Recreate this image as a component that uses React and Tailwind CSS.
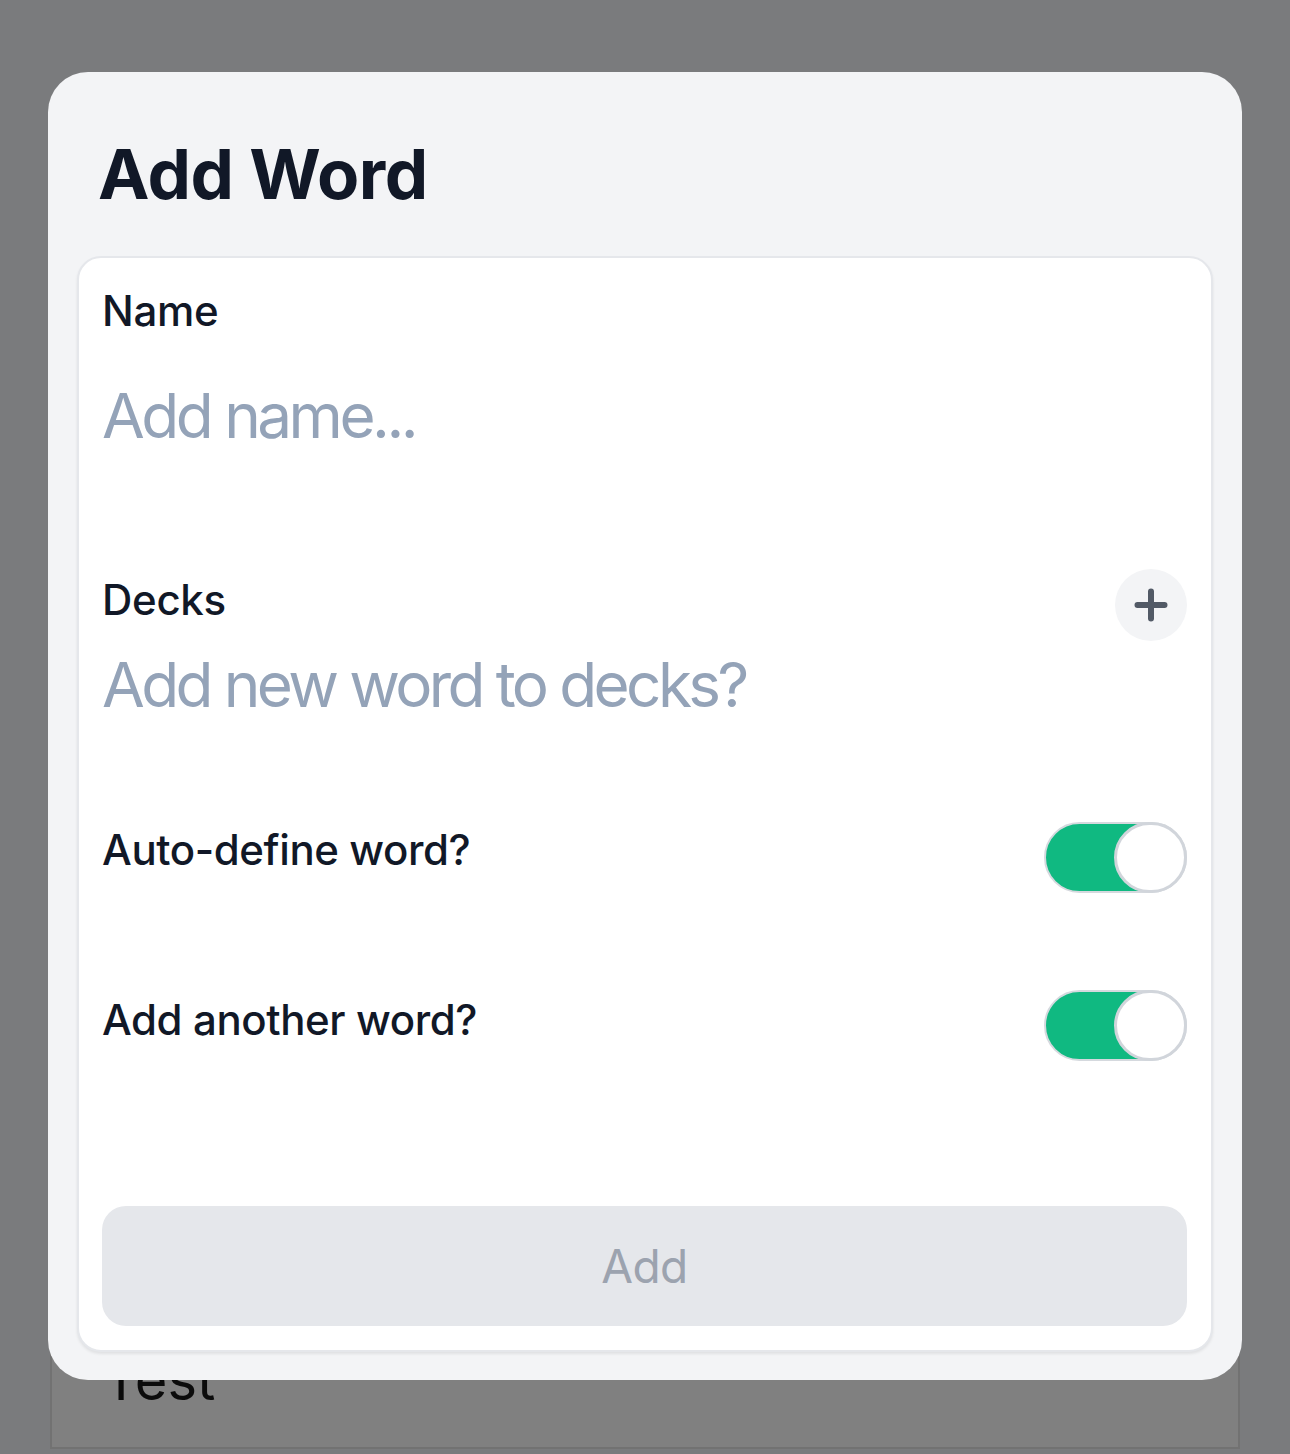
import React from "react";

function Toggle() {
  return (
    <div className="flex h-[71px] w-[143px] shrink-0 items-center justify-end rounded-full border-2 border-[#d5d9de] bg-[#10b981]">
      <div className="h-[71px] w-[73px] -mr-[2px] rounded-full border-[3px] border-[#d1d5db] bg-white" />
    </div>
  );
}

export default function App() {
  return (
    <div
      className="relative h-[1454px] w-full overflow-hidden bg-[#7a7b7d]"
      style={{ fontFamily: "Inter, 'Noto Sans', 'Liberation Sans', sans-serif" }}
    >
      {/* underlying page content */}
      <div className="px-[50px] pt-[1290px]">
        <div className="h-[159px] border-x-2 border-b-2 border-[#727272] bg-[#808080] px-[51px] pt-[60px]">
          <div className="text-[56px] leading-[60px] text-[#0b0b0b]">Test</div>
        </div>
      </div>

      {/* modal */}
      <div className="absolute left-[48px] top-[72px] flex h-[1308px] w-[1194px] flex-col rounded-[40px] bg-[#f3f4f6] px-[29px] pb-[28px]">
        <h1 className="mt-[60px] pl-[21px] text-[69px] font-bold leading-[84px] tracking-[-0.5px] text-[#111827]">
          Add Word
        </h1>
        <div className="mt-[40px] flex flex-1 flex-col rounded-[24px] border-2 border-[#e5e7eb] bg-white pb-6 pl-[23px] pr-6 pt-[28px] shadow-[0_2px_3px_rgba(0,0,0,0.08)]">
          <div className="text-[42px] font-medium leading-[50px] tracking-[-0.3px] text-[#111827]">Name</div>
          <div className="mt-[42px] text-[62px] leading-[75px] tracking-[-3.5px] text-[#94a3b8]">Add name...</div>

          <div className="mt-[116px] flex items-start justify-between">
            <div className="pt-[6px] text-[42px] font-medium leading-[50px] tracking-[-0.3px] text-[#111827]">Decks</div>
            <div className="flex h-[72px] w-[72px] items-center justify-center rounded-full bg-[#f3f4f6]">
              <svg width="36" height="36" viewBox="0 0 24 24" fill="none" stroke="#525a66" strokeWidth="4" strokeLinecap="round">
                <path d="M12 3v18M3 12h18" />
              </svg>
            </div>
          </div>
          <div className="mt-[6px] text-[62px] leading-[75px] tracking-[-3.6px] text-[#94a3b8]">Add new word to decks?</div>

          <div className="mt-[100px] flex items-start justify-between">
            <div className="pt-[3px] text-[42px] font-medium leading-[50px] tracking-[-0.4px] text-[#111827]">Auto-define word?</div>
            <Toggle />
          </div>

          <div className="mt-[97px] flex items-start justify-between">
            <div className="pt-[5px] text-[42px] font-medium leading-[50px] tracking-[-0.4px] text-[#111827]">Add another word?</div>
            <Toggle />
          </div>

          <div className="mt-auto flex h-[120px] items-center justify-center rounded-[24px] bg-[#e5e7eb] text-[46px] tracking-[-0.5px] text-[#9ca3af]">
            Add
          </div>
        </div>
      </div>
    </div>
  );
}
